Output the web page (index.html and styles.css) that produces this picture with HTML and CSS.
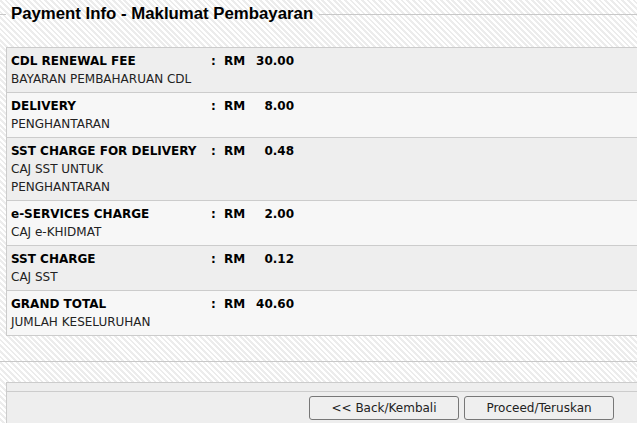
FILE: index.html
```html
<!DOCTYPE html>
<html lang="en">
<head>
    <meta charset="UTF-8">
    <title>Payment Info</title>
    <link rel="stylesheet" href="styles.css">
</head>
<body>
<main class="page">
    <div class="section-head">
        <span class="head-line head-line-left"></span>
        <h2 class="section-title">Payment Info - Maklumat Pembayaran</h2>
        <span class="head-line"></span>
    </div>

    <div class="fee-panel">
        <div class="fee-row">
            <div class="fee-label"><b>CDL RENEWAL FEE</b><span>BAYARAN PEMBAHARUAN CDL</span></div>
            <div class="fee-colon">:</div>
            <div class="fee-cur">RM</div>
            <div class="fee-amount">30.00</div>
        </div>
        <div class="fee-row">
            <div class="fee-label"><b>DELIVERY</b><span>PENGHANTARAN</span></div>
            <div class="fee-colon">:</div>
            <div class="fee-cur">RM</div>
            <div class="fee-amount">8.00</div>
        </div>
        <div class="fee-row">
            <div class="fee-label"><b>SST CHARGE FOR DELIVERY</b><span>CAJ SST UNTUK<br>PENGHANTARAN</span></div>
            <div class="fee-colon">:</div>
            <div class="fee-cur">RM</div>
            <div class="fee-amount">0.48</div>
        </div>
        <div class="fee-row">
            <div class="fee-label"><b>e-SERVICES CHARGE</b><span>CAJ e-KHIDMAT</span></div>
            <div class="fee-colon">:</div>
            <div class="fee-cur">RM</div>
            <div class="fee-amount">2.00</div>
        </div>
        <div class="fee-row">
            <div class="fee-label"><b>SST CHARGE</b><span>CAJ SST</span></div>
            <div class="fee-colon">:</div>
            <div class="fee-cur">RM</div>
            <div class="fee-amount">0.12</div>
        </div>
        <div class="fee-row">
            <div class="fee-label"><b>GRAND TOTAL</b><span>JUMLAH KESELURUHAN</span></div>
            <div class="fee-colon">:</div>
            <div class="fee-cur">RM</div>
            <div class="fee-amount">40.60</div>
        </div>
    </div>

    <div class="section-end"></div>

    <div class="action-panel">
        <div class="action-band"></div>
        <div class="action-buttons">
            <button class="action-button">&lt;&lt; Back/Kembali</button>
            <button class="action-button">Proceed/Teruskan</button>
        </div>
    </div>
</main>
</body>
</html>
```

FILE: styles.css
```css
html, body {
    margin: 0;
    overflow: hidden;
}

body {
    font-family: "DejaVu Sans", Verdana, sans-serif;
    font-size: 12px;
    color: #222;
    background: repeating-linear-gradient(45deg, #fff 0, #fff 2px, #ececec 2px, #ececec 4px);
}

.page {
    height: 423px;
}

/* Legend style header */
.section-head {
    display: flex;
    align-items: center;
    height: 28px;
}

.head-line {
    flex: 1;
    height: 1px;
    background: #c8c8c8;
    margin-top: 1px;
}

.head-line-left {
    flex: 0 0 6px;
}

.section-title {
    font-family: "Liberation Sans", Arial, sans-serif;
    font-size: 16.8px;
    font-weight: bold;
    color: #000;
    margin: 0 6px 0 5px;
}

/* Fee table */
.fee-panel {
    margin: 19px -4px 0 6px;
    border: 1px solid #ccc;
}

.fee-row {
    display: grid;
    grid-template-columns: 200px 13px 30px 40px;
    padding: 4px;
    line-height: 18px;
    background: #eee;
    border-top: 1px solid #ccc;
}

.fee-row:first-child {
    border-top: none;
}

.fee-row:nth-child(even) {
    background: #f7f7f7;
}

.fee-label b {
    display: block;
    color: #000;
}

.fee-label span {
    display: block;
    white-space: nowrap;
}

.fee-colon,
.fee-cur,
.fee-amount {
    font-weight: bold;
    color: #000;
}

.fee-amount {
    text-align: right;
}

.section-end {
    height: 1px;
    background: #c8c8c8;
    margin-top: 25px;
}

/* Bottom action bar */
.action-panel {
    margin: 20px -4px 0 6px;
    border: 1px solid #ccc;
    background: #eee;
}

.action-band {
    height: 8px;
    border-bottom: 1px solid #ccc;
}

.action-buttons {
    display: flex;
    justify-content: flex-end;
    gap: 5px;
    padding: 4px 26px 4px 0;
}

.action-button {
    width: 150px;
    height: 24px;
    font-family: "DejaVu Sans", Verdana, sans-serif;
    font-size: 12px;
    color: #222;
    background: #efefef;
    border: 1px solid #777;
    border-radius: 3px;
    padding: 0;
}
```
